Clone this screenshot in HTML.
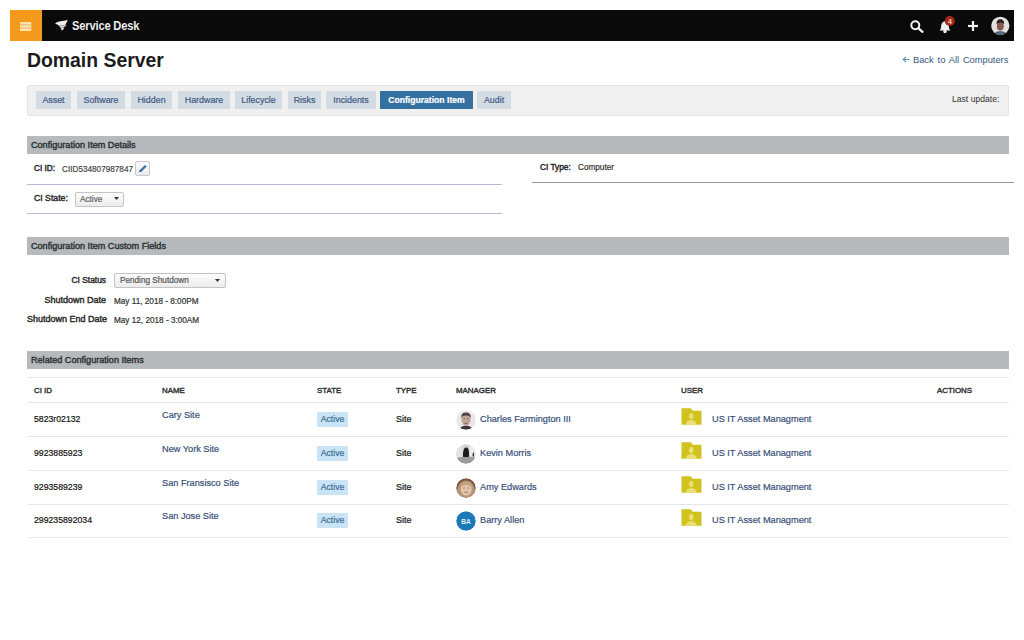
<!DOCTYPE html>
<html><head><meta charset="utf-8">
<style>
*{box-sizing:border-box;margin:0;padding:0}
html,body{width:1024px;height:640px;overflow:hidden;background:#fff}
body{position:relative;font-family:"Liberation Sans",sans-serif;color:#222}
.a{position:absolute;white-space:nowrap;line-height:1}
.val,.td,.lnk,.tab,.badge{-webkit-text-stroke:0.2px currentColor}
.sec span,.th,.lbl{font-weight:normal!important;-webkit-text-stroke:0.42px currentColor}
#topbar{position:absolute;left:10px;top:10px;width:1004px;height:31px;background:#0a0a0a}
#burger{position:absolute;left:10px;top:10px;width:32px;height:31px;background:#f5991d}
#burger i{position:absolute;left:10px;width:11px;height:2px;background:#fde7c2}
.title{font-size:19.4px;font-weight:bold;color:#1c1c1c}
#tabbar{position:absolute;left:27px;top:85px;width:982px;height:31px;background:#f0f0f0;border:1px solid #e3e3e3;border-radius:2px}
.tab{position:absolute;top:91px;height:18px;background:#d3dce3;color:#3f5a85;font-size:8.9px;line-height:18px;text-align:center}
.tab.on{background:#3470a0;color:#fff;font-weight:bold;font-size:8.6px}
.sec{position:absolute;left:27px;width:982px;height:18px;background:#b6babc}
.sec span{position:absolute;left:4px;top:0;line-height:18px;font-size:9.1px;font-weight:bold;color:#2e3236}
.lbl{font-size:9.0px;font-weight:bold;color:#2a2a2a}
.val{font-size:8.2px;color:#333}
.th{font-size:7.9px;font-weight:bold;color:#333}
.hl{position:absolute;height:1px;background:#e4e6e8}
.td{font-size:8.7px;color:#141414}
.lnk{font-size:9.2px;color:#3a5078}
.badge{position:absolute;left:317px;width:31px;height:15px;background:#c8e4f6;color:#3e6c93;font-size:8.7px;line-height:15px;text-align:center;border-radius:1px}
.av{position:absolute;left:456px;width:20px;height:20px;border-radius:50%;overflow:hidden}
.fold{position:absolute;left:681px;width:21px;height:17px}
</style></head><body>

<div id="topbar"></div>
<div id="burger"></div>
<svg class="a" style="left:19px;top:21px" width="14" height="11" viewBox="0 0 14 11"><rect x="1" y="1" width="11.3" height="9" fill="#fde4ae"/><rect x="1" y="3.4" width="11.3" height="1" fill="#e6b56a"/><rect x="1" y="6.6" width="11.3" height="1" fill="#e6b56a"/></svg>
<svg class="a" style="left:50px;top:16px" width="22" height="18" viewBox="0 0 22 18"><path d="M5 7.5 Q7 5.6 10.5 5.3 Q14 5.2 17.8 4.1 Q17 6.5 15.5 8.2 L16.4 9.6 Q14.5 11.2 13.2 11.6 L14.3 12.3 Q13 14 11.8 14.6 Q11 12 9.3 10 Q7.5 8.4 5 7.5 Z" fill="#efefef"/><path d="M9.5 9.9 Q12.5 9.8 16 9.2 M11 12 Q12.5 12 14 11.6" stroke="#555" stroke-width="0.6" fill="none"/></svg>
<div class="a" style="left:72px;top:20px;font-size:12.6px;font-weight:bold;color:#ececec;letter-spacing:-0.2px;transform:scaleX(0.885);transform-origin:0 0">Service Desk</div>

<!-- right header icons -->
<svg class="a" style="left:910px;top:20px" width="14" height="13" viewBox="0 0 14 13">
 <circle cx="5.3" cy="5.3" r="4" fill="none" stroke="#f2f2f2" stroke-width="2"/>
 <line x1="8.2" y1="8.2" x2="12.5" y2="11.8" stroke="#f2f2f2" stroke-width="2.2" stroke-linecap="round"/>
</svg>
<svg class="a" style="left:938px;top:15px" width="18" height="19" viewBox="0 0 18 19">
 <path d="M1.5 15.5 Q3.2 14 3.2 11 Q3.2 7 7 6.2 Q10.8 7 10.8 11 Q10.8 14 12.5 15.5 Z" fill="#f0f0f0"/>
 <circle cx="7" cy="16.5" r="1.7" fill="#f0f0f0"/>
 <circle cx="11.8" cy="6" r="5" fill="#a3281a"/>
 <text x="11.8" y="8.7" font-size="7.5" font-weight="bold" fill="#f0c0b0" text-anchor="middle" font-family="Liberation Sans">4</text>
</svg>
<svg class="a" style="left:967px;top:20px" width="12" height="12" viewBox="0 0 12 12">
 <rect x="4.9" y="1" width="2.2" height="10" fill="#f2f2f2"/>
 <rect x="1" y="4.9" width="10" height="2.2" fill="#f2f2f2"/>
</svg>
<svg class="a" style="left:991px;top:16px" width="19" height="19" viewBox="0 0 19 19">
 <defs><clipPath id="cav"><circle cx="9.3" cy="9.8" r="9.1"/></clipPath></defs>
 <g clip-path="url(#cav)">
 <rect width="19" height="19" fill="#e4e0e0"/>
 <path d="M2 19 Q3 15.5 9.3 15 Q15.6 15.5 16.6 19 Z" fill="#56667a"/>
 <ellipse cx="9.3" cy="10" rx="3.5" ry="4.6" fill="#8a5a4e"/>
 <path d="M5.4 8 Q5.6 3.2 9.4 3.2 Q13.2 3.2 13.2 8 Q11 6.2 9.3 6.4 Q7.5 6.2 5.4 8 Z" fill="#222"/>
 </g>
</svg>

<div class="a title" style="left:27px;top:51px">Domain Server</div>
<div class="a" style="left:913px;top:56px;font-size:9.3px;color:#34567f;word-spacing:1.3px">Back to All Computers</div>
<svg class="a" style="left:902px;top:56px" width="8" height="7" viewBox="0 0 8 7"><path d="M7.5 3.5 H1.5 M4 0.8 L1.2 3.5 L4 6.2" stroke="#5b8db3" stroke-width="1.1" fill="none"/></svg>

<div id="tabbar"></div>
<div class="tab" style="left:36px;width:35px">Asset</div>
<div class="tab" style="left:77px;width:48px">Software</div>
<div class="tab" style="left:131px;width:41px">Hidden</div>
<div class="tab" style="left:178px;width:52px">Hardware</div>
<div class="tab" style="left:235px;width:47px">Lifecycle</div>
<div class="tab" style="left:288px;width:33px">Risks</div>
<div class="tab" style="left:326px;width:50px">Incidents</div>
<div class="tab on" style="left:380px;width:93px">Configuration Item</div>
<div class="tab" style="left:477px;width:34px">Audit</div>
<div class="a" style="left:952px;top:95px;font-size:8.6px;color:#333">Last update:</div>

<!-- Section 1 -->
<div class="sec" style="top:136px"><span>Configuration Item Details</span></div>
<div class="a lbl" style="left:34px;top:165px;font-size:8.2px">CI ID:</div>
<div class="a val" style="left:62px;top:166px;color:#4a4a4a">CIID534807987847</div>
<div class="a" style="left:135px;top:161px;width:15px;height:15px;border:1px solid #c9c9c9;border-radius:2px;background:linear-gradient(#fafafa,#e9ecef)"></div>
<svg class="a" style="left:138px;top:164px" width="10" height="9" viewBox="0 0 10 9">
 <path d="M1.4 7.9 L1.9 6 L7 0.9 L8.7 2.6 L3.6 7.5 Z" fill="#3d70a3"/><path d="M1.4 7.9 L1.9 6 L3.6 7.5 Z" fill="#2a4a70"/>
</svg>
<div class="hl" style="left:27px;top:184px;width:475px;background:#b3b9d6"></div>
<div class="a lbl" style="left:34px;top:194px;font-size:8.7px">CI State:</div>
<div class="a" style="left:75px;top:192px;width:49px;height:15px;border:1px solid #c4c4c4;border-radius:2px;background:linear-gradient(#fdfdfd,#ececec)"></div>
<div class="a val" style="left:80px;top:196px;color:#606060">Active</div>
<svg class="a" style="left:114px;top:197px" width="5" height="4" viewBox="0 0 5 4"><path d="M0 0 H5 L2.5 3 Z" fill="#333"/></svg>
<div class="hl" style="left:27px;top:213px;width:475px;background:#b3b9d6"></div>

<div class="a lbl" style="left:540px;top:163px;font-size:8.3px">CI Type:</div>
<div class="a val" style="left:578px;top:164px">Computer</div>
<div class="hl" style="left:532px;top:182px;width:482px;background:#8e9b9b"></div>

<!-- Section 2 -->
<div class="sec" style="top:237px"><span>Configuration Item Custom Fields</span></div>
<div class="a lbl" style="left:27px;top:276px;width:79px;text-align:right;font-size:8.4px">CI Status</div>
<div class="a" style="left:114px;top:273px;width:112px;height:15px;border:1px solid #c4c4c4;border-radius:2px;background:linear-gradient(#fdfdfd,#ececec)"></div>
<div class="a val" style="left:120px;top:277px;color:#555">Pending Shutdown</div>
<svg class="a" style="left:215px;top:279px" width="5" height="4" viewBox="0 0 5 4"><path d="M0 0 H5 L2.5 3 Z" fill="#333"/></svg>
<div class="a lbl" style="left:27px;top:296px;width:79px;text-align:right">Shutdown Date</div>
<div class="a val" style="left:114px;top:298px">May 11, 2018 - 8:00PM</div>
<div class="a lbl" style="left:27px;top:315px;width:79px;text-align:right">Shutdown End Date</div>
<div class="a val" style="left:114px;top:317px">May 12, 2018 - 3:00AM</div>

<!-- Section 3 -->
<div class="sec" style="top:351px"><span>Related Configuration Items</span></div>
<div class="hl" style="left:27px;top:377px;width:982px"></div>
<div class="a th" style="left:34px;top:386.5px">CI ID</div>
<div class="a th" style="left:162px;top:386.5px">NAME</div>
<div class="a th" style="left:317px;top:386.5px">STATE</div>
<div class="a th" style="left:396px;top:386.5px">TYPE</div>
<div class="a th" style="left:456px;top:386.5px">MANAGER</div>
<div class="a th" style="left:681px;top:386.5px">USER</div>
<div class="a th" style="left:937px;top:386.5px">ACTIONS</div>
<div class="hl" style="left:27px;top:402px;width:982px"></div>

<!-- rows -->
<div class="a td" style="left:34px;top:415px">5823r02132</div>
<div class="a lnk" style="left:162px;top:411px">Cary Site</div>
<div class="badge" style="top:412px">Active</div>
<div class="a td" style="left:396px;top:415px;font-size:9px">Site</div>
<div class="av" style="top:410px"><svg width="20" height="20" viewBox="0 0 20 20"><defs><clipPath id="c1"><circle cx="10" cy="10" r="9.8"/></clipPath></defs><g clip-path="url(#c1)"><rect width="20" height="20" fill="#ebe6e8"/><path d="M3 20 Q4 16 10 15.5 Q16 16 17 20 Z" fill="#3e3434"/><ellipse cx="10" cy="9.8" rx="4.6" ry="5.8" fill="#bfa79a"/><path d="M5.2 8 Q5 2.6 10 2.6 Q15 2.6 14.8 8 Q13.5 5.4 10 5.6 Q6.5 5.4 5.2 8 Z" fill="#4c4242"/><path d="M7.5 8.6 H9 M11 8.6 H12.5" stroke="#6a5550" stroke-width="0.8"/><path d="M8.5 13.2 Q10 14 11.5 13.2" stroke="#7a4a40" stroke-width="0.8" fill="none"/></g></svg></div>
<div class="a lnk" style="left:480px;top:415px">Charles Farmington III</div>
<div class="fold" style="top:408px"><svg width="21" height="17" viewBox="0 0 21 17"><path d="M0.5 0.3 H10 L11.5 2.8 H20.5 V16.7 H0.5 Z" fill="#d2c21e"/><ellipse cx="10.2" cy="8" rx="2.3" ry="3.1" fill="#ebdf78"/><path d="M4.6 16.7 Q5.4 12.2 10.2 11.9 Q15 12.2 15.8 16.7 Z" fill="#ebdf78"/></svg></div>
<div class="a lnk" style="left:712px;top:415px">US IT Asset Managment</div>
<div class="hl" style="left:28px;top:436px;width:981px"></div>
<div class="a td" style="left:34px;top:449px">9923885923</div>
<div class="a lnk" style="left:162px;top:445px">New York Site</div>
<div class="badge" style="top:446px">Active</div>
<div class="a td" style="left:396px;top:449px;font-size:9px">Site</div>
<div class="av" style="top:444px"><svg width="20" height="20" viewBox="0 0 20 20"><defs><clipPath id="c2"><circle cx="10" cy="10" r="9.8"/></clipPath></defs><g clip-path="url(#c2)"><rect width="20" height="20" fill="#d0d0d0"/><path d="M0 0 H7 L6 20 H0 Z" fill="#e2e2e2"/><path d="M13 0 H20 V13 L14 12 Z" fill="#ececec"/><path d="M0 14 Q10 11 20 14 V20 H0 Z" fill="#9c9c9c"/><path d="M7.2 13 Q6.5 8 8 5 Q10 2.5 12 4.5 Q13.5 7 12.8 13 Z" fill="#1c1c1c"/><path d="M17 8 Q19 10 17.5 13 L16.5 12 Z" fill="#2a2a2a"/></g></svg></div>
<div class="a lnk" style="left:480px;top:449px">Kevin Morris</div>
<div class="fold" style="top:442px"><svg width="21" height="17" viewBox="0 0 21 17"><path d="M0.5 0.3 H10 L11.5 2.8 H20.5 V16.7 H0.5 Z" fill="#d2c21e"/><ellipse cx="10.2" cy="8" rx="2.3" ry="3.1" fill="#ebdf78"/><path d="M4.6 16.7 Q5.4 12.2 10.2 11.9 Q15 12.2 15.8 16.7 Z" fill="#ebdf78"/></svg></div>
<div class="a lnk" style="left:712px;top:449px">US IT Asset Managment</div>
<div class="hl" style="left:28px;top:470px;width:981px"></div>
<div class="a td" style="left:34px;top:483px">9293589239</div>
<div class="a lnk" style="left:162px;top:479px">San Fransisco Site</div>
<div class="badge" style="top:480px">Active</div>
<div class="a td" style="left:396px;top:483px;font-size:9px">Site</div>
<div class="av" style="top:478px"><svg width="20" height="20" viewBox="0 0 20 20"><defs><clipPath id="c3"><circle cx="10" cy="10" r="9.8"/></clipPath></defs><g clip-path="url(#c3)"><rect width="20" height="20" fill="#7a5840"/><path d="M1 20 Q0 3 10 2.5 Q20 3 19 20 Z" fill="#b89878"/><ellipse cx="10.2" cy="11.2" rx="5.4" ry="6.4" fill="#e2c6ae"/><path d="M4.5 9.5 Q5.5 4 10.5 4.2 Q15.5 4.5 15.8 9.5 Q13 6.8 10 7 Q7 7 4.5 9.5Z" fill="#c4a482"/><path d="M7.3 10 H8.8 M11.4 10 H12.9" stroke="#7a5a48" stroke-width="0.9"/><path d="M8 13.8 Q10.2 15.2 12.4 13.8" stroke="#a86a5a" stroke-width="0.9" fill="none"/></g></svg></div>
<div class="a lnk" style="left:480px;top:483px">Amy Edwards</div>
<div class="fold" style="top:476px"><svg width="21" height="17" viewBox="0 0 21 17"><path d="M0.5 0.3 H10 L11.5 2.8 H20.5 V16.7 H0.5 Z" fill="#d2c21e"/><ellipse cx="10.2" cy="8" rx="2.3" ry="3.1" fill="#ebdf78"/><path d="M4.6 16.7 Q5.4 12.2 10.2 11.9 Q15 12.2 15.8 16.7 Z" fill="#ebdf78"/></svg></div>
<div class="a lnk" style="left:712px;top:483px">US IT Asset Managment</div>
<div class="hl" style="left:28px;top:504px;width:981px"></div>
<div class="a td" style="left:34px;top:516px">299235892034</div>
<div class="a lnk" style="left:162px;top:512px">San Jose Site</div>
<div class="badge" style="top:513px">Active</div>
<div class="a td" style="left:396px;top:516px;font-size:9px">Site</div>
<div class="av" style="top:511px"><svg width="20" height="20" viewBox="0 0 20 20"><circle cx="10" cy="10" r="9.8" fill="#1a79b6"/><text x="10.1" y="12.6" font-size="6.6" font-weight="bold" fill="#dff0fb" text-anchor="middle" font-family="Liberation Sans">BA</text></svg></div>
<div class="a lnk" style="left:480px;top:516px">Barry Allen</div>
<div class="fold" style="top:509px"><svg width="21" height="17" viewBox="0 0 21 17"><path d="M0.5 0.3 H10 L11.5 2.8 H20.5 V16.7 H0.5 Z" fill="#d2c21e"/><ellipse cx="10.2" cy="8" rx="2.3" ry="3.1" fill="#ebdf78"/><path d="M4.6 16.7 Q5.4 12.2 10.2 11.9 Q15 12.2 15.8 16.7 Z" fill="#ebdf78"/></svg></div>
<div class="a lnk" style="left:712px;top:516px">US IT Asset Managment</div>
<div class="hl" style="left:28px;top:537px;width:981px"></div>
</body></html>
